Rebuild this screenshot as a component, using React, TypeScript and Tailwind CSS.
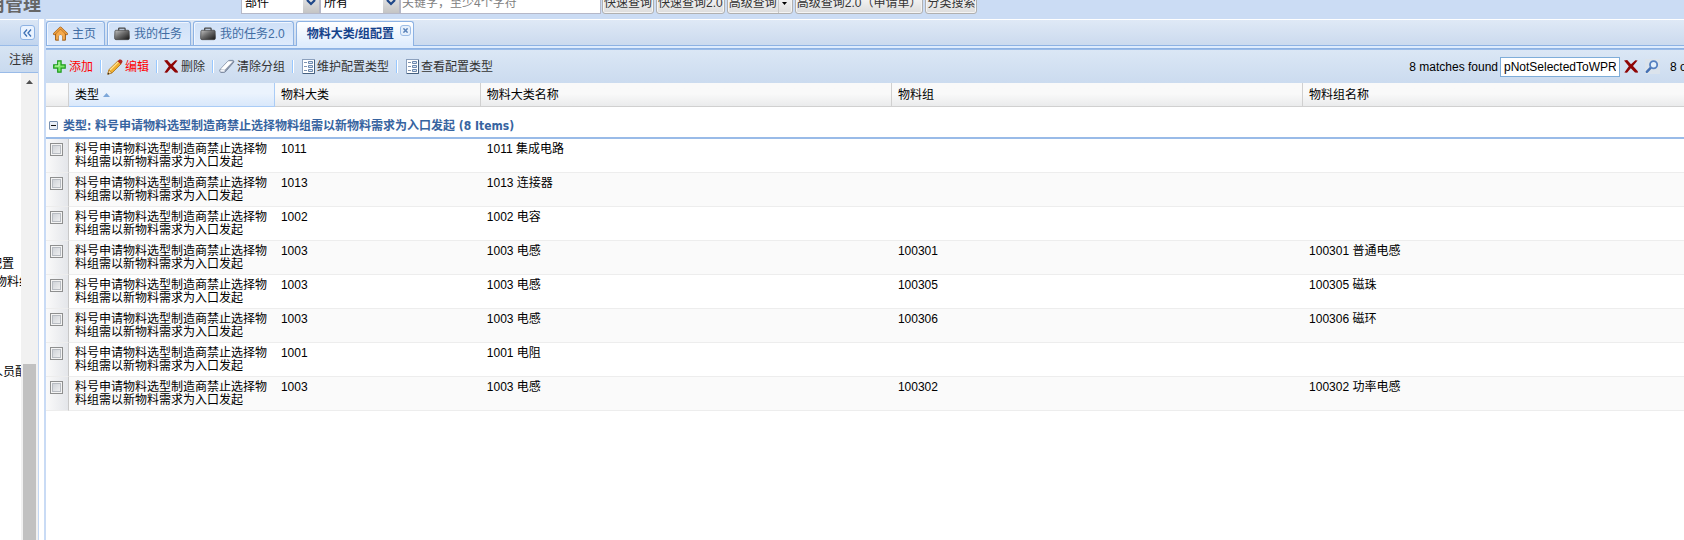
import React from "react";

type Row = { group: string; groupName: string; item?: string; itemName?: string };

const CATEGORY = "料号申请物料选型制造商禁止选择物料组需以新物料需求为入口发起";

const rows: Row[] = [
  { group: "1011", groupName: "1011 集成电路" },
  { group: "1013", groupName: "1013 连接器" },
  { group: "1002", groupName: "1002 电容" },
  { group: "1003", groupName: "1003 电感", item: "100301", itemName: "100301 普通电感" },
  { group: "1003", groupName: "1003 电感", item: "100305", itemName: "100305 磁珠" },
  { group: "1003", groupName: "1003 电感", item: "100306", itemName: "100306 磁环" },
  { group: "1001", groupName: "1001 电阻" },
  { group: "1003", groupName: "1003 电感", item: "100302", itemName: "100302 功率电感" },
];

function HomeIcon() {
  return (
    <svg width="15" height="15" viewBox="0 0 14 14">
      <path d="M2.4 6.5V13.2H5.4V9.4Q7 7 8.6 9.4V13.2H11.6V6.5L7 2.2Z" fill="#f5a94a" stroke="#9a5a14" strokeWidth="0.9" />
      <path d="M5.4 13.2V9.4Q7 7 8.6 9.4V13.2Z" fill="#e6f0fc" />
      <path d="M1.2 7.4L7 1.6L12.8 7.4" fill="none" stroke="#a05c18" strokeWidth="2.2" strokeLinejoin="round" strokeLinecap="round" />
      <path d="M1.4 7.2L7 1.7L12.6 7.2" fill="none" stroke="#f5a540" strokeWidth="1.2" strokeLinecap="round" />
    </svg>
  );
}

function CaseIcon() {
  return (
    <svg width="16" height="14" viewBox="0 0 17 14">
      <defs>
        <linearGradient id="caseFill" x1="0" y1="0" x2="1" y2="1">
          <stop offset="0" stopColor="#c4c4c4" />
          <stop offset="0.45" stopColor="#6c6c6c" />
          <stop offset="1" stopColor="#161616" />
        </linearGradient>
      </defs>
      <path d="M5 4V1.4Q5 0.8 5.6 0.8H11Q11.8 0.8 11.8 1.4V4" fill="none" stroke="#444" strokeWidth="1.3" />
      <path d="M2 3H15Q15.8 3 16 4L16.4 11Q16.4 13 15 13H2Q0.6 13 0.6 11L1 4Q1.2 3 2 3Z" fill="url(#caseFill)" stroke="#444" strokeWidth="0.8" />
    </svg>
  );
}

function PlusIcon() {
  return (
    <svg width="13" height="13" viewBox="0 0 13 13">
      <path d="M4.7 0.8H8.1V4.8H12.2V8.1H8.1V12.2H4.7V8.1H0.7V4.8H4.7Z" fill="#7be868" stroke="#1f9a1f" strokeWidth="1.2" />
      <path d="M6 2V6H2" fill="none" stroke="#c0f8b0" />
    </svg>
  );
}

function PencilIcon() {
  return (
    <svg width="16" height="16" viewBox="0 0 16 16">
      <path d="M0.8 15.2L2 10.6L11 1.8L14.2 4.8L5.2 13.8Z" fill="#f0b030" stroke="#a86c10" strokeWidth="0.8" />
      <path d="M3 11L11.6 2.6" stroke="#ffe49a" strokeWidth="1.3" />
      <path d="M10.6 2.2L12.4 0.6Q14 0 15.2 1.6Q16 3 15 3.8L13.8 5.2Z" fill="#b02a20" />
      <path d="M0.8 15.2L1.8 11.2L4.8 13.8Z" fill="#f6dcae" stroke="#a86c10" strokeWidth="0.6" />
      <path d="M0.6 15.4L1.2 13.6L2.4 14.9Z" fill="#222" />
    </svg>
  );
}

function CrossIcon() {
  return (
    <svg width="14" height="13" viewBox="0 0 14 13">
      <path d="M0 0.6L3.2 0L7 4.2L11.4 0.2L13.6 0.6L9 6L13.8 11.2V12.8L11 12.6L6.8 8.2L3 12.8L0.4 12.4L4.8 6.2Z" fill="#8f0505" />
    </svg>
  );
}

function EraserIcon() {
  return (
    <svg width="16" height="15" viewBox="0 0 17 15">
      <path d="M1 11L9 2.2Q10.2 1 11.4 1H14.8Q16.4 1.4 15.6 3L7.8 12Q6.6 13.8 5 13.8H2Q0.2 13 1 11Z" fill="#8e99ad" stroke="#6a7890" strokeWidth="0.8" />
      <path d="M1.4 10.8L9.6 1.8H14.8L6.2 11Z" fill="#fff" />
      <path d="M1.4 11.2H6V13.2H2Q0.8 12.6 1.4 11.2Z" fill="#eef2f8" />
    </svg>
  );
}

function FormIcon() {
  return (
    <svg width="16" height="15" viewBox="-3 0 16 15">
      <rect x="0.5" y="0.5" width="12" height="14" fill="#fff" stroke="#8ba0bd" />
      <path d="M12.5 1V14.5H1" fill="none" stroke="#46607f" />
      <path d="M2 3.5H5M2 7.5H5M2 11.5H5" stroke="#8094b0" />
      <path d="M6.5 2.5H10.5V4.5H6.5ZM6.5 6.5H10.5V8.5H6.5ZM6.5 10.5H10.5V12.5H6.5Z" fill="#dce8f6" stroke="#6d88ad" />
    </svg>
  );
}

function SearchIcon() {
  return (
    <svg width="15" height="15" viewBox="0 0 15 15">
      <path d="M1.8 12.8L5.6 8.8" stroke="#4470b4" strokeWidth="2.4" strokeLinecap="round" />
      <circle cx="8.6" cy="5.8" r="3.6" fill="#e4f0fb" stroke="#5580c0" strokeWidth="1.8" />
    </svg>
  );
}

function Separator() {
  return <span className="mr-[5px] ml-[7px] h-[13px] w-[2px] shrink-0 border-r border-white bg-[#98c8ff]" />;
}

function Tool({ icon, label, red }: { icon: React.ReactNode; label: string; red?: boolean }) {
  return (
    <button type="button" className={`flex h-6 shrink-0 items-center gap-[2px] whitespace-nowrap ${red ? "text-[#ff0000]" : "text-[#333]"}`}>
      <span className="flex w-4 justify-center">{icon}</span>
      {label}
    </button>
  );
}

function Tab({ icon, label }: { icon: React.ReactNode; label: string }) {
  return (
    <button
      type="button"
      className="flex h-[24px] shrink-0 items-center gap-1 rounded-t-[3px] border border-b-0 border-[#8db2e3] bg-linear-to-b from-[#cfe0f7] to-[#deebfc] pr-2 pl-[6px] whitespace-nowrap text-[#416da3] shadow-[inset_1px_1px_0_#f0f6ff]"
    >
      {icon}
      {label}
    </button>
  );
}

function Picker({ label, value, width }: { label: string; value: string; width: string }) {
  return (
    <div className={`relative flex h-6 shrink-0 border border-[#b5b8c8] bg-white ${width}`}>
      <select aria-label={label} className="h-full w-full appearance-none bg-transparent pt-[2px] pl-[3px] text-[12px] text-black outline-none">
        <option>{value}</option>
      </select>
      <span className="pointer-events-none absolute inset-y-0 right-0 flex w-4 items-center justify-center bg-linear-to-b from-[#f0f0f0] to-[#c4c4c4]">
        <svg width="10" height="7" viewBox="0 0 10 7">
          <path d="M1 1L5 5L9 1" fill="none" stroke="#1f4788" strokeWidth="2.2" />
        </svg>
      </span>
    </div>
  );
}

function QueryButton({ label, menu }: { label: string; menu?: boolean }) {
  return (
    <button type="button" className="flex h-6 shrink-0 items-center rounded-[3px] border border-[#b0b0b0] bg-linear-to-b from-white to-[#dcdcdc] px-[1px] pt-[2px] whitespace-nowrap text-[#333] shadow-[inset_0_0_0_1px_#f4f4f4]">
      {label}
      {menu && (
        <span className="ml-[1px] flex h-full w-[13px] items-center justify-center border-l border-[#c8c8c8]">
          <svg width="5" height="3" viewBox="0 0 5 3"><path d="M0 0H5L2.5 3Z" fill="#000" /></svg>
        </span>
      )}
    </button>
  );
}

function TopBar() {
  return (
    <header className="flex h-[19px] items-end overflow-hidden bg-[#cbdcf4]">
      <h1 className="flex h-[28px] w-[241px] shrink-0 items-center overflow-hidden text-[18px] font-bold text-[#666]">
        <span className="-ml-[13px] whitespace-nowrap">用管理</span>
      </h1>
      <div className="mb-[5px] flex h-6 shrink-0 items-center">
        <Picker label="类别" value="部件" width="w-[79px]" />
        <Picker label="范围" value="所有" width="w-[80px]" />
        <input aria-label="关键字" placeholder="关键字，至少4个字符" className="h-6 w-[201px] border border-[#b5b8c8] bg-white px-[1px] pt-[2px] text-[12px] outline-none placeholder:text-[#808080]" />
        <div className="ml-[1px] flex gap-[2px]">
          <QueryButton label="快速查询" />
          <QueryButton label="快速查询2.0" />
          <QueryButton label="高级查询" menu />
          <QueryButton label="高级查询2.0（申请单）" />
          <QueryButton label="分类搜索" />
        </div>
      </div>
    </header>
  );
}

function Sidebar() {
  return (
    <aside className="flex w-[39px] shrink-0 flex-col border-r border-[#c3d7f3] bg-white">
      <div className="flex h-[27px] items-center justify-end border-y border-t-white border-b-[#99bbe8] bg-linear-to-b from-[#dae6f5] to-[#c2d5ee] pr-[3px]">
        <button type="button" aria-label="折叠" className="flex size-[15px] items-center justify-center rounded-[3px] border border-[#8db2e3] bg-[#eaf3ff]">
          <svg width="9" height="8" viewBox="0 0 9 8"><path d="M4 0.5L1 4L4 7.5M8 0.5L5 4L8 7.5" fill="none" stroke="#3b6fb4" strokeWidth="1.3" /></svg>
        </button>
      </div>
      <div className="flex h-[27px] items-center justify-end border-b border-[#99bbe8] bg-linear-to-b from-[#d7e4f3] to-[#c9daef] pt-[2px] pr-[5px]">
        <button type="button" className="whitespace-nowrap text-[#333]">注销</button>
      </div>
      <div className="flex flex-1">
        <nav className="flex w-[21px] flex-col items-end overflow-hidden pt-[182px] leading-[18px] text-black">
          <a href="#config" className="mr-[7px] whitespace-nowrap">配置</a>
          <a href="#group" className="-mr-[10px] whitespace-nowrap">物料组</a>
          <a href="#staff" className="mt-[72px] -mr-[18px] whitespace-nowrap">人员配置</a>
        </nav>
        <div className="flex flex-1 flex-col items-center bg-[#f1f1f1] pt-[7px]">
          <svg width="7" height="4" viewBox="0 0 7 4"><path d="M3.5 0L7 4H0Z" fill="#505050" /></svg>
          <span className="mt-[280px] w-[13px] flex-1 bg-[#c1c1c1]" />
        </div>
      </div>
    </aside>
  );
}

function TabStrip() {
  return (
    <div className="border-b border-[#8db2e3] bg-[#deecfd] pb-[2px]">
      <div className="flex h-[27px] items-end gap-[2px] border-t border-b border-t-white border-b-[#8db2e3] bg-linear-to-b from-[#dfe9f6] to-[#cbdaee]">
        <Tab icon={<HomeIcon />} label="主页" />
        <Tab icon={<CaseIcon />} label="我的任务" />
        <Tab icon={<CaseIcon />} label="我的任务2.0" />
        <div className="z-10 -mb-[1px] flex h-[25px] shrink-0 items-center rounded-t-[3px] border border-b-0 border-[#8db2e3] bg-linear-to-b from-white to-[#deecfd] pr-[2px] pl-[10px] font-bold text-[#15428b]">
          <button type="button" className="whitespace-nowrap">物料大类/组配置</button>
          <button type="button" aria-label="关闭" className="mb-[8px] ml-[6px] flex size-[11px] items-center justify-center rounded-[3px] border border-[#9dbde6] bg-[#e6f0fc]">
            <svg width="5" height="5" viewBox="0 0 5 5"><path d="M0.4 0.4L4.6 4.6M4.6 0.4L0.4 4.6" stroke="#5a82b8" strokeWidth="1.5" /></svg>
          </button>
        </div>
      </div>
    </div>
  );
}

function Toolbar() {
  return (
    <div className="flex h-[34px] items-center overflow-hidden border-t border-[#99bbe8] bg-linear-to-b from-[#dbe7f5] to-[#cbdbef] pl-[5px]">
      <Tool icon={<PlusIcon />} label="添加" red />
      <Separator />
      <Tool icon={<PencilIcon />} label="编辑" red />
      <Separator />
      <Tool icon={<CrossIcon />} label="删除" />
      <Separator />
      <Tool icon={<EraserIcon />} label="清除分组" />
      <Separator />
      <Tool icon={<FormIcon />} label="维护配置类型" />
      <Separator />
      <Tool icon={<FormIcon />} label="查看配置类型" />
      <div className="ml-auto flex shrink-0 items-center text-black">
        <label htmlFor="find" className="mr-[2px] whitespace-nowrap">8 matches found</label>
        <input id="find" defaultValue="pNotSelectedToWPR" className="h-5 w-[120px] border border-[#7eadd9] bg-white px-[3px] text-[12px] outline-none" />
        <button type="button" aria-label="清除" className="ml-[4px]"><CrossIcon /></button>
        <button type="button" aria-label="搜索" className="ml-[7px] bg-[#dbe3ec]"><SearchIcon /></button>
        <span className="ml-[10px] w-[14px] overflow-hidden whitespace-nowrap">8 of 8</span>
      </div>
    </div>
  );
}

function Grid() {
  const head = "border-r border-b border-[#d0d0d0] px-[6px] text-left font-normal last:border-r-0";
  const cell = "border-b border-[#ededed] px-[6px] pt-[4px] pb-[3px] align-top leading-[13px]";
  return (
    <table className="w-full table-fixed border-separate border-spacing-0 text-black">
      <colgroup>
        <col className="w-[23px]" />
        <col className="w-[12.57%]" />
        <col className="w-[12.57%]" />
        <col className="w-[25.1%]" />
        <col className="w-[25.1%]" />
        <col />
      </colgroup>
      <thead>
        <tr className="h-6 bg-linear-to-b from-[#f9f9f9] from-45% to-[#e9eaeb]">
          <th className={head}><span className="sr-only">选择</span></th>
          <th className="border-r border-b border-[#aaccf6] bg-linear-to-b from-[#ebf3fd] from-45% to-[#d9e8fb] px-[6px] text-left font-normal">
            <span className="flex items-center gap-1">
              类型
              <svg width="7" height="4" viewBox="0 0 7 4"><path d="M3.5 0L7 4H0Z" fill="#7da7d9" /></svg>
            </span>
          </th>
          <th className={head}>物料大类</th>
          <th className={head}>物料大类名称</th>
          <th className={head}>物料组</th>
          <th className={head}>物料组名称</th>
        </tr>
      </thead>
      <tbody>
        <tr>
          <td colSpan={6} className="h-8 border-b-2 border-[#99bbe8] pt-2 pl-[3px]">
            <button type="button" className="flex items-center gap-[5px] font-['DejaVu_Sans_Condensed','Noto_Sans_CJK_SC',sans-serif] leading-4 font-bold text-[#3764a0]">
              <svg className="mb-[2px]" width="9" height="9" viewBox="0 0 9 9">
                <rect x="0.5" y="0.5" width="8" height="8" rx="0.5" fill="#e8eef6" stroke="#7890b0" />
                <path d="M2 4.5H7" stroke="#111" />
              </svg>
              类型: {CATEGORY} (8 Items)
            </button>
          </td>
        </tr>
        {rows.map((row, i) => (
          <tr key={i} className={`h-[34px] ${i % 2 ? "bg-[#fafafa]" : "bg-white"}`}>
            <td className="border-r border-b border-r-[#c8c8c8] border-b-[#ededed] bg-linear-to-r from-[#fafafa] to-[#e4e6ea] pt-[4px] pl-[4px] align-top">
              <input type="checkbox" aria-label={`选择 ${row.groupName}`} className="block size-[13px] appearance-none border border-[#8e8f8f] bg-linear-to-br from-[#c8ccd2] to-[#f6f6f6] shadow-[inset_0_0_0_1px_#f4f4f4,inset_0_0_0_2px_#b8bcc2]" />
            </td>
            <td className={cell}>{CATEGORY}</td>
            <td className={cell}>{row.group}</td>
            <td className={cell}>{row.groupName}</td>
            <td className={cell}>{row.item}</td>
            <td className={cell}>{row.itemName}</td>
          </tr>
        ))}
      </tbody>
    </table>
  );
}

export default function App() {
  return (
    <div className="flex h-screen flex-col overflow-hidden bg-[#dfe8f6] font-['Liberation_Sans','Noto_Sans_CJK_SC',sans-serif] text-[12px] leading-4">
      <TopBar />
      <div className="flex min-h-0 flex-1">
        <Sidebar />
        <div className="w-[5px] shrink-0 bg-white" />
        <main className="flex min-w-0 flex-1 flex-col border-l-2 border-[#c9dbf5] bg-white">
          <TabStrip />
          <Toolbar />
          <Grid />
        </main>
      </div>
    </div>
  );
}
